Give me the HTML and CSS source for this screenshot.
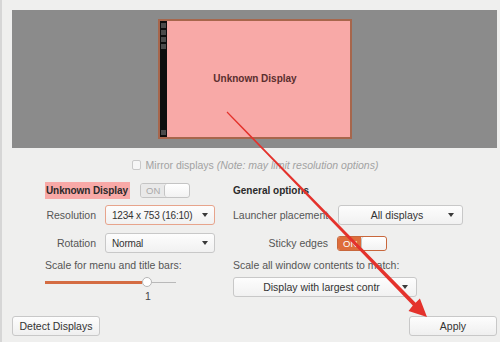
FILE: index.html
```html
<!DOCTYPE html>
<html lang="en">
  <head>
    <meta charset="UTF-8" />
    <meta name="viewport" content="width=device-width, initial-scale=1.0" />
    <title>Displays</title>
    <link rel="stylesheet" href="styles.css">
  </head>
  <body>
    <div class="window">
      <!-- monitor arrangement preview -->
      <div class="arrangement">
        <div class="monitor">
          <div class="launcher">
            <span class="launcher-icon"></span>
            <span class="launcher-icon"></span>
            <span class="launcher-icon"></span>
            <span class="launcher-icon"></span>
            <span class="launcher-spacer"></span>
            <span class="launcher-icon"></span>
          </div>
          <div class="monitor-screen">Unknown Display</div>
        </div>
      </div>

      <div class="mirror">
        <span class="checkbox"></span>
        <span>Mirror displays <em>(Note: may limit resolution options)</em></span>
      </div>

      <div class="settings">
        <div class="col col-display">
          <div class="row row-head">
            <span class="display-name">Unknown Display</span>
            <div class="switch switch-off">
              <span class="switch-label">ON</span>
              <span class="switch-knob"></span>
            </div>
          </div>
          <div class="row row-combo">
            <span class="field-label">Resolution</span>
            <div class="combo combo-focus combo-left">
              <span class="combo-text">1234 x 753 (16:10)</span>
              <span class="combo-arrow"></span>
            </div>
          </div>
          <div class="row row-combo row-gap">
            <span class="field-label">Rotation</span>
            <div class="combo combo-left">
              <span class="combo-text">Normal</span>
              <span class="combo-arrow"></span>
            </div>
          </div>
          <p class="section-text">Scale for menu and title bars:</p>
          <div class="slider">
            <span class="slider-fill"></span>
            <span class="slider-knob"></span>
            <span class="slider-rest"></span>
          </div>
          <p class="slider-value">1</p>
        </div>

        <div class="col col-general">
          <div class="row row-head">
            <span class="section-title">General options</span>
          </div>
          <div class="row row-combo">
            <span class="general-label">Launcher placement</span>
            <div class="combo combo-launcher">
              <span class="combo-text">All displays</span>
              <span class="combo-arrow"></span>
            </div>
          </div>
          <div class="row row-combo row-gap">
            <span class="general-label general-label-right">Sticky edges</span>
            <div class="switch switch-on">
              <span class="switch-label">ON</span>
              <span class="switch-knob"></span>
            </div>
          </div>
          <p class="section-text">Scale all window contents to match:</p>
          <div class="combo combo-scale">
            <span class="combo-text">Display with largest contr</span>
            <span class="combo-arrow"></span>
          </div>
        </div>
      </div>

      <div class="actions">
        <button class="button">Detect Displays</button>
        <button class="button">Apply</button>
      </div>
    </div>

    <!-- red annotation arrow drawn over the dialog -->
    <svg class="annotation" width="500" height="342" viewBox="0 0 500 342">
      <polygon points="227.4,111.6 415.6,302.8 419.9,298.5 427,317 408.5,310.9 412.8,305.6 226.6,112.4" fill="#e4322c" />
    </svg>
  </body>
</html>
```

FILE: styles.css
```css
:root {
  --bg: #efefee;
  --text: #3c3c3c;
  --muted: #a2a2a2;
  --border: #c8c8c8;
  --orange: #de6d3b;
  --pink: #f8a9a7;
}

* {
  margin: 0;
  padding: 0;
  box-sizing: border-box;
}

body {
  position: relative;
  width: 500px;
  height: 342px;
  overflow: hidden;
  background: var(--bg);
  color: var(--text);
  font-family: "Liberation Sans", Arial, sans-serif;
  font-size: 10.5px;
  border-left: 2px solid #d6d6d6;
}

.window {
  height: 100%;
  display: flex;
  flex-direction: column;
  padding: 10px 3px 6px 10px;
}

/* arrangement preview */
.arrangement {
  height: 138px;
  background: #8b8b8b;
  display: flex;
  justify-content: center;
  align-items: center;
}

.monitor {
  width: 194px;
  height: 120px;
  display: flex;
  border: 2px solid #a7664c;
  background: var(--pink);
}

.launcher {
  width: 7px;
  background: #0d0d0d;
  display: flex;
  flex-direction: column;
  align-items: center;
  gap: 2px;
  padding: 2px 0;
}

.launcher-icon {
  width: 5px;
  height: 5px;
  background: #4a4a4a;
}

.launcher-spacer {
  flex: 1;
}

.monitor-screen {
  flex: 1;
  display: flex;
  justify-content: center;
  align-items: center;
  padding-right: 6px;
  padding-bottom: 2px;
  font-weight: bold;
  font-size: 10px;
  color: #5a2e2e;
  white-space: nowrap;
}

/* mirror checkbox */
.mirror {
  margin-top: 10px;
  height: 13px;
  display: flex;
  justify-content: center;
  align-items: center;
  gap: 5px;
  color: var(--muted);
  padding-left: 1px;
  white-space: nowrap;
}

.checkbox {
  width: 9px;
  height: 10px;
  border: 1px solid #c9c9c9;
  border-radius: 2px;
  background: #f6f6f6;
}

/* settings grid */
.settings {
  display: flex;
  margin-top: 11px;
  padding-left: 33px;
  white-space: nowrap;
}

.col-display {
  width: 188px;
}

.col-general {
  width: 240px;
}

.row {
  display: flex;
  align-items: center;
}

.row-head {
  height: 17px;
}

.row-combo {
  height: 20px;
  margin-top: 6px;
}

.row-gap {
  margin-top: 8px;
}

.display-name {
  height: 17px;
  line-height: 17px;
  width: 85px;
  padding-left: 1px;
  background: var(--pink);
  font-weight: bold;
  font-size: 10px;
  letter-spacing: -0.1px;
  color: #2a2a2a;
  margin-right: 10px;
  overflow: hidden;
}

.section-title {
  font-weight: bold;
  font-size: 10px;
  color: #2a2a2a;
}

.field-label {
  width: 51px;
  text-align: right;
  margin-right: 9px;
  color: #555;
}

.general-label {
  width: 105px;
  color: #555;
}

.general-label-right {
  width: 95px;
  text-align: right;
  margin-right: 9px;
}

/* switches */
.switch {
  width: 50px;
  height: 15px;
  display: flex;
  border: 1px solid #c4c4c4;
  border-radius: 3px;
  overflow: hidden;
  font-size: 9.5px;
}

.switch-label {
  flex: 1;
  line-height: 13px;
  padding-left: 5px;
}

.switch-off .switch-label {
  background: #e9e9e9;
  color: #aaa;
}

.switch-on {
  border-color: #c8673c;
}

.switch-on .switch-label {
  background: var(--orange);
  color: #fff;
}

.switch-knob {
  width: 25px;
  background: linear-gradient(#ffffff, #f2f2f2);
  border-left: 1px solid #c4c4c4;
  border-radius: 3px;
}

/* combo boxes */
.combo {
  height: 20px;
  display: flex;
  align-items: center;
  border: 1px solid var(--border);
  border-radius: 3px;
  background: linear-gradient(#fdfdfd, #f1f1f1);
  padding: 0 8px 0 6px;
  color: #333;
}

.combo-left {
  width: 110px;
  padding-right: 6px;
}

.combo-left .combo-text {
  font-size: 10px;
  letter-spacing: -0.2px;
}

.combo-focus {
  border-color: #e7a48c;
}

.combo-text {
  flex: 1;
  overflow: hidden;
}

.combo-launcher {
  width: 125px;
}

.combo-scale {
  width: 184px;
  margin-top: 6px;
}

.combo-launcher .combo-text,
.combo-scale .combo-text {
  text-align: center;
  padding-left: 4px;
}

.combo-arrow {
  width: 0;
  height: 0;
  margin-left: 3px;
  border-left: 3.5px solid transparent;
  border-right: 3.5px solid transparent;
  border-top: 4px solid #3a3a3a;
}

/* scale slider */
.section-text {
  margin-top: 6px;
  height: 12px;
  line-height: 12px;
  color: #555;
}

.slider {
  width: 131px;
  height: 10px;
  margin-top: 6px;
  display: flex;
  align-items: center;
}

.slider-fill {
  width: 97px;
  height: 3px;
  background: #d46c42;
}

.slider-knob {
  width: 10px;
  height: 10px;
  border: 1px solid #b5b5b5;
  border-radius: 50%;
  background: #fff;
}

.slider-rest {
  flex: 1;
  height: 1px;
  background: #b9b9b9;
}

.slider-value {
  padding-left: 100px;
  margin-top: 3px;
  line-height: 12px;
  color: #444;
}

/* bottom buttons */
.actions {
  margin-top: auto;
  display: flex;
  justify-content: space-between;
}

.button {
  width: 88px;
  height: 20px;
  border: 1px solid var(--border);
  border-radius: 3px;
  background: linear-gradient(#fdfdfd, #efefef);
  font-family: inherit;
  font-size: 10.5px;
  color: #333;
}

.annotation {
  position: absolute;
  top: 0;
  left: -2px;
  pointer-events: none;
}
```
